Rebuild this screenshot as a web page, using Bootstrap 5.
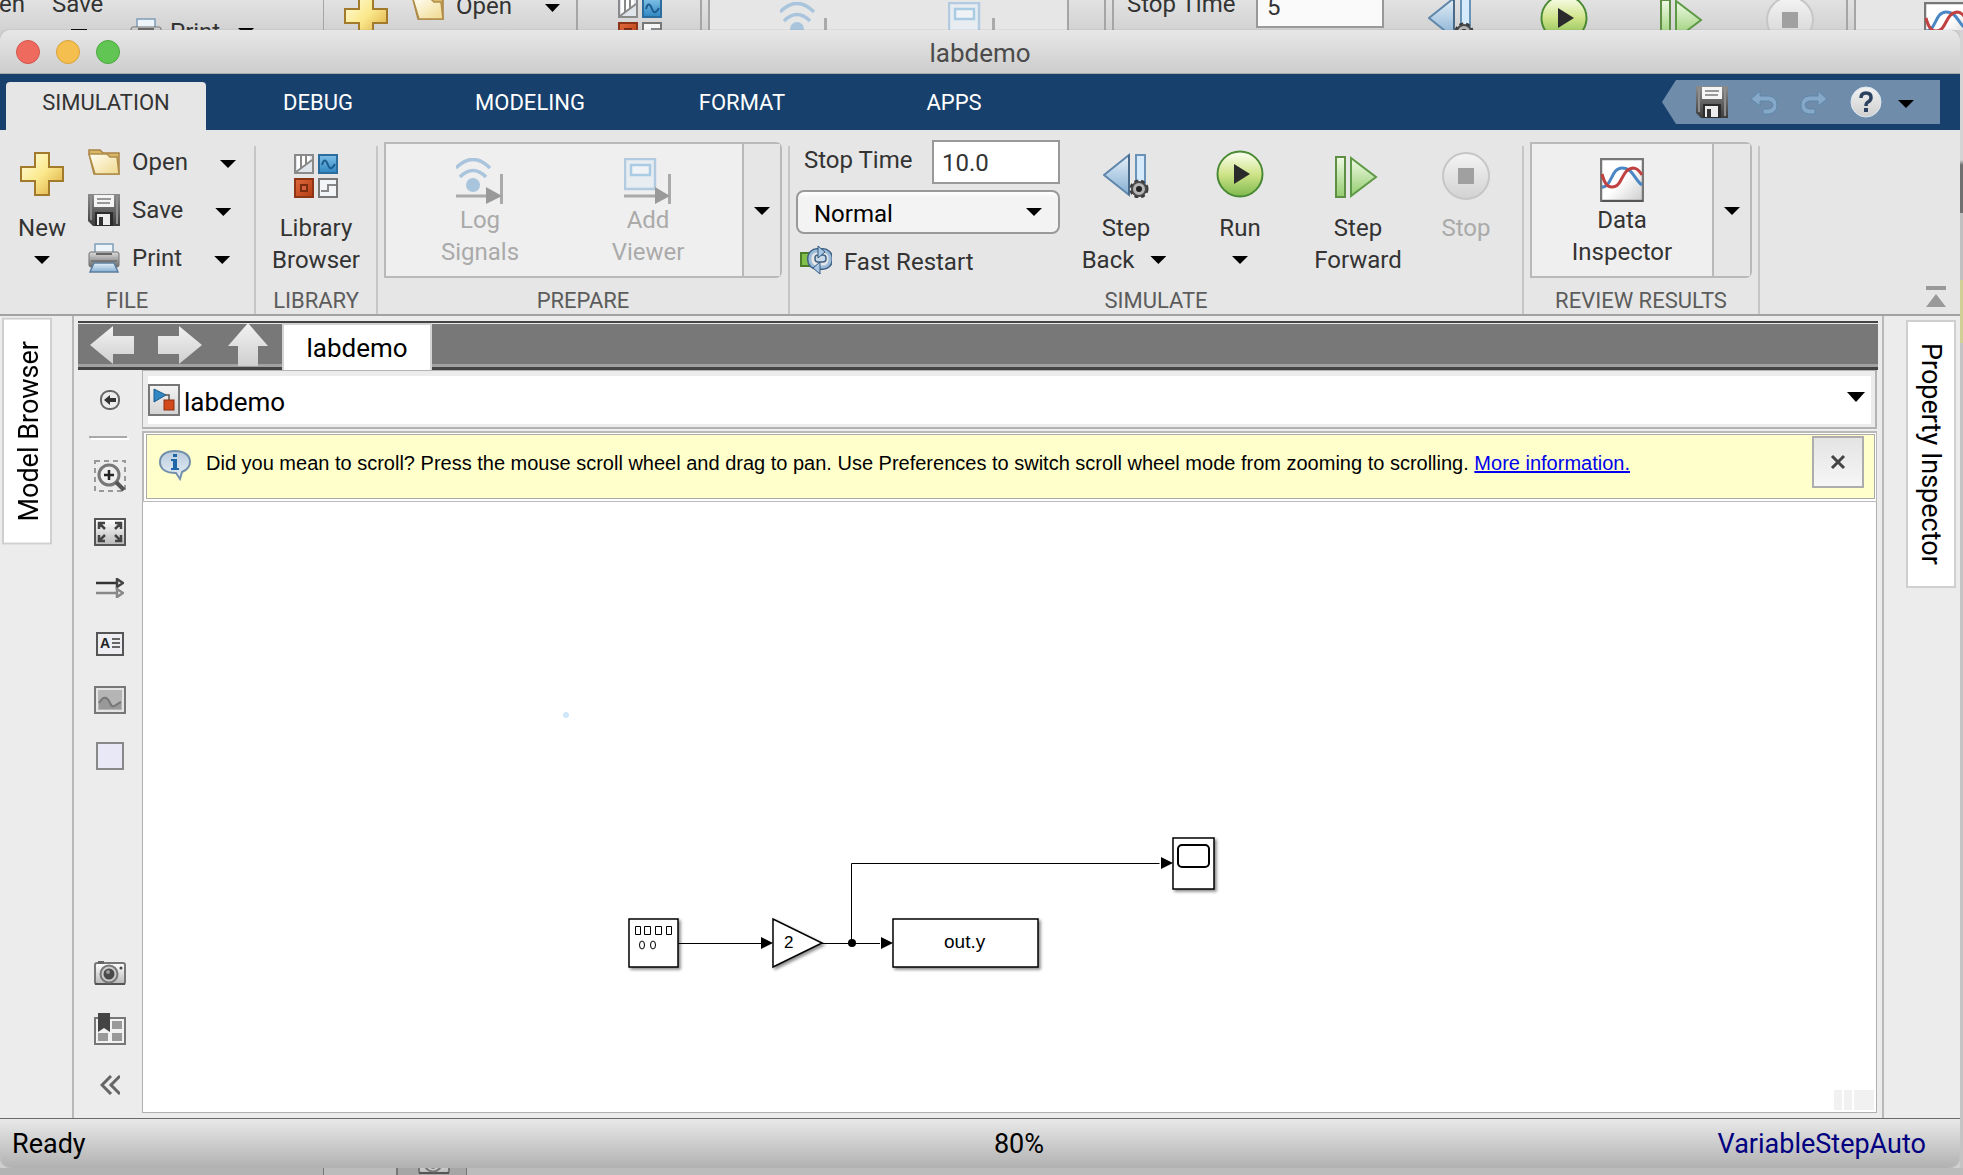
<!DOCTYPE html>
<html lang="en">
<head>
<meta charset="utf-8">
<meta name="viewport" content="width=device-width, initial-scale=1">
<title>labdemo</title>
<link href="https://cdn.jsdelivr.net/npm/bootstrap@5.3.0/dist/css/bootstrap.min.css" rel="stylesheet">
<style>
  :root { --ui: Roboto, "Liberation Sans", sans-serif; --ink: #333; --rule: #b9b9b9; }
  body { font-family: var(--ui); font-size: 24px; line-height: 32px; color: var(--ink); background: #cfcfcf; overflow: hidden; }
  button, input, select { font: inherit; color: inherit; }
  svg { display: block; flex: none; }
  .plain { background: none; border: 0; padding: 0; }
  .plain:disabled { color: #aaa; }

  /* desktop: strips of the windows behind */
  .behind-top { height: 30px; overflow: hidden; background: linear-gradient(#e2e2e2, #d2d2d2); }
  .behind-bottom { height: 7px; overflow: hidden; background: #a6a6a6; }
  .behind-right { width: 3px; background: linear-gradient(#d4d4d4 0 130px, #707070 135px 183px, #c0c0c0 183px 250px, #cfcf96 250px 313px, #c4c4c4 313px); }

  .app { border-radius: 10px 10px 12px 12px; overflow: hidden; background: #ececec; box-shadow: 0 0 1px #777; }
  .titlebar { height: 44px; background: linear-gradient(#e7e7e7, #cdcdcd); border-bottom: 1px solid #aaa; font-size: 26px; color: #4b4b4b; padding-top: 2px; }
  .lights { left: 16px; top: 10px; gap: 16px; }
  .light { width: 24px; height: 24px; border-radius: 50%; border: 1px solid; padding: 0; }
  .light.red { background: #ee6a5f; border-color: #d5564c; }
  .light.amber { background: #f5bf4f; border-color: #d9a23c; }
  .light.green { background: #61c554; border-color: #4ea73f; }

  .tabstrip { height: 56px; background: #17406d; padding: 8px 0 0 6px; font-size: 22px; }
  .tabs { gap: 12px; }
  .tabs .nav-link { width: 200px; height: 48px; padding: 5px 0; color: #fff; text-align: center; border-radius: 4px 4px 0 0; }
  .tabs .nav-link.active { background: #e6e6e6; color: var(--ink); }
  .quick { width: 278px; height: 44px; gap: 22px; margin: -2px 20px 0 0; padding-left: 34px; background: #6f8dab; clip-path: polygon(14px 0, 100% 0, 100% 100%, 14px 100%, 0 50%); }

  .ribbon { background: #e6e6e6; border-bottom: 2px solid #a2a2a2; padding-top: 8px; height: 186px; }
  .section-rule { width: 2px; margin-top: 8px; background: #c6c6c6; }
  .group-label { font-size: 22px; line-height: 28px; color: #5c5c5c; text-align: center; height: 27px; }
  .group-body { height: 149px; overflow: hidden; }
  .big { padding-top: 12px; text-align: center; line-height: 32px; display: flex; flex-direction: column; align-items: center; }
  .big > svg { margin-bottom: 14px; }
  .big > .arrow { margin-top: 12px; }
  .arrow { width: 16px; height: 8px; background: #000; clip-path: polygon(0 0, 100% 0, 50% 100%); display: block; flex: none; }
  .file-row { height: 48px; }
  .gallery { height: 136px; margin: 4px 6px 0; border: 2px solid var(--rule); border-radius: 0 6px 6px 0; background: #efefef; }
  .gallery .cell { padding-top: 14px; line-height: 32px; display: flex; flex-direction: column; align-items: center; }
  .gallery .pair { padding: 0 10px; }
  .gallery .pair .cell { width: 168px; }
  .gallery .more { width: 38px; border-left: 2px solid var(--rule); background: #e6e6e6; padding-top: 2px; }
  .sim-fields { width: 270px; padding: 2px 0 0 6px; }
  .time-input { width: 128px; height: 44px; border: 2px solid #999; background: #fff; padding: 2px 8px 0; outline: 0; }
  .mode-wrap { position: relative; margin-top: 6px; }
  .mode { width: 100%; height: 44px; appearance: none; border: 2px solid #999; border-radius: 8px; background: linear-gradient(#fff, #f3f3f3 6px); color: #000; padding: 3px 16px 0; }
  .mode-wrap .arrow { position: absolute; right: 18px; top: 18px; pointer-events: none; }

  .side { color: #000; font-size: 27px; }
  .side-left { width: 74px; border-right: 2px solid var(--rule); padding: 2px 0 0 2px; }
  .side-right { width: 78px; border-left: 2px solid var(--rule); padding: 4px 4px 0 0; }
  .side button { writing-mode: vertical-rl; width: 50px; border: 2px solid #cfcfcf; background: #fff; padding: 21px 0; line-height: 46px; }
  .side-left button { transform: rotate(180deg); line-height: 50px; }

  .docbar { height: 49px; margin: 5px 4px 0; border-top: 2px solid #444; border-bottom: 3px solid #444; background: linear-gradient(#e6e6e6 1px, #787878 1px 41px, #a2a2a2 41px); }
  .doctab { width: 150px; height: 48px; margin: 0 0 -3px 2px; border: solid #d4d4d4; border-width: 2px 2px 0; background: #fff; color: #000; font-size: 26px; padding: 0; }
  .palette { width: 68px; padding: 2px 0 5px; }
  .palette button { height: 56px; width: 64px; margin-left: 4px; display: flex; align-items: center; justify-content: center; }
  .palette hr { width: 38px; margin: 8px 0 10px 15px; border-top: 2px solid #a9a9a9; box-shadow: 2px 2px 0 #fff; opacity: 1; }
  .path-row { border: solid #b3b3b3; border-width: 1px 2px 2px 1px; padding: 5px 4px 4px 5px; height: 59px; }
  .path-row .inner { background: #fff; color: #000; font-size: 26px; height: 48px; }
  .path-row .arrow { width: 18px; height: 10px; margin: 0 2px 6px 0; }
  .notice { margin-top: 2px; border: solid #b9b9b9; border-width: 2px 1px 1px 2px; padding: 1px 1px 2px 2px; height: 71px; background: #fff; }
  .notice .inner { height: 65px; border: 1px solid #aaa; background: #ffffcc; font-family: "Liberation Sans", Arial, sans-serif; font-size: 20px; color: #000; padding-left: 12px; }
  .notice .message { padding: 12px 0 0 15px; }
  .notice a { color: #0000ee; }
  .dismiss { width: 52px; height: 52px; border: 2px solid #adadad; background: linear-gradient(#e4e4e4, #f6f6f6); margin: 1px 10px 0 0; }
  .canvas { background: #fff; border: solid #b0b0b0; border-width: 0 1px 1px; margin-bottom: 5px; position: relative; overflow: hidden; }
  .grip { right: 2px; bottom: 2px; gap: 2px; }
  .grip i { width: 8px; height: 20px; background: #f1f1f1; }
  .grip i:last-child { width: 20px; }
  .statusbar { height: 50px; border-top: 1px solid #6a6a6a; background: linear-gradient(#e9e9e9, #b1b1b1); color: #000; font-size: 27px; line-height: 32px; padding: 0 34px 0 12px; }
  .zoom-level { padding-left: 100px; }
  .solver { color: #000080; text-decoration: none; }
</style>
<script src="https://cdn.jsdelivr.net/npm/bootstrap@5.3.0/dist/js/bootstrap.bundle.min.js"></script>
</head>
<body class="d-flex flex-column vh-100">

<svg width="0" height="0" class="position-absolute" aria-hidden="true">
  <defs>
    <linearGradient id="gGold" x1="0" y1="0" x2="1" y2="1"><stop offset="0" stop-color="#fffde0"/><stop offset=".5" stop-color="#fbe98d"/><stop offset="1" stop-color="#dba43a"/></linearGradient>
    <linearGradient id="gFold" x1="0" y1="0" x2="1" y2="1"><stop offset="0" stop-color="#fffef4"/><stop offset="1" stop-color="#f0d98c"/></linearGradient>
    <linearGradient id="gDark" x1="0" y1="0" x2="0" y2="1"><stop offset="0" stop-color="#8c8c8c"/><stop offset="1" stop-color="#3c3c3c"/></linearGradient>
    <linearGradient id="gPrn" x1="0" y1="0" x2="0" y2="1"><stop offset="0" stop-color="#dcdcdc"/><stop offset="1" stop-color="#6a6a6a"/></linearGradient>
    <linearGradient id="gPale" x1="0" y1="0" x2="0" y2="1"><stop offset="0" stop-color="#fff"/><stop offset="1" stop-color="#b9b9b9"/></linearGradient>
    <linearGradient id="gBlue" x1="0" y1="0" x2="0" y2="1"><stop offset="0" stop-color="#e6f1f9"/><stop offset="1" stop-color="#85aed2"/></linearGradient>
    <linearGradient id="gInfo" x1="0" y1="0" x2="0" y2="1"><stop offset="0" stop-color="#b9cbdc"/><stop offset="1" stop-color="#e8f0f7"/></linearGradient>
    <linearGradient id="gSky" x1="0" y1="0" x2="0" y2="1"><stop offset="0" stop-color="#7fc0e6"/><stop offset="1" stop-color="#2f86c2"/></linearGradient>
    <linearGradient id="gRun" x1="0" y1="0" x2="0" y2="1"><stop offset="0" stop-color="#fdfff4"/><stop offset=".5" stop-color="#cfe488"/><stop offset="1" stop-color="#7fb94e"/></linearGradient>
    <linearGradient id="gStep" x1="0" y1="0" x2="0" y2="1"><stop offset="0" stop-color="#f0fae6"/><stop offset="1" stop-color="#93cc6e"/></linearGradient>
    <linearGradient id="gGrey" x1="0" y1="0" x2="0" y2="1"><stop offset="0" stop-color="#f4f4f4"/><stop offset="1" stop-color="#d2d2d2"/></linearGradient>
    <linearGradient id="gRust" x1="0" y1="0" x2="1" y2="1"><stop offset="0" stop-color="#e0693c"/><stop offset="1" stop-color="#b23c12"/></linearGradient>
    <linearGradient id="gNav" x1="0" y1="0" x2="0" y2="1"><stop offset="0" stop-color="#f2f2f2"/><stop offset="1" stop-color="#cfcfcf"/></linearGradient>
    <linearGradient id="gFade" x1="0" y1="0" x2="1" y2="1"><stop offset=".5" stop-color="#fff"/><stop offset="1" stop-color="#ccc"/></linearGradient>
    <filter id="shade" x="-20%" y="-20%" width="150%" height="150%"><feDropShadow dx="2" dy="2" stdDeviation="1.4" flood-color="#000" flood-opacity=".45"/></filter>
  </defs>
  <symbol id="iPlus" viewBox="0 0 44 44"><path d="M15 1h14v14h14v14H29v14H15V29H1V15h14z" fill="url(#gGold)" stroke="#a27a2c" stroke-width="2"/></symbol>
  <symbol id="iOpen" viewBox="0 0 32 26"><path d="M1 5V1h11l3 3h16v21H6z" fill="#d9b768" stroke="#a98343" stroke-width="1.5"/><path d="M1 5h18l3 3h7l2 17H7z" fill="url(#gFold)" stroke="#b08d48" stroke-width="1.5"/></symbol>
  <symbol id="iSave" viewBox="0 0 32 32"><path d="M0 0h32v32H5l-5-5z" fill="url(#gDark)"/><path d="M2 2h2v24H2zM28 2h2v28h-2z" fill="#8e8e8e"/><path d="M6 1h20v12H6z" fill="#f5f5f5"/><path d="M9 5h14M9 9h13" stroke="#999" stroke-width="2"/><path d="M7 18h18v14H7z" fill="#2b2b2b"/><path d="M9 20h13v11H9z" fill="#ececec"/><path d="M11 23h4v8h-4z" fill="#333"/></symbol>
  <symbol id="iPrint" viewBox="0 0 32 30"><path d="M7 1h18v11H7z" fill="#edf4fa" stroke="#7f9cb8" stroke-width="1.5"/><rect x="1" y="9" width="30" height="15" rx="2" fill="url(#gPrn)" stroke="#707070"/><path d="M8 10h16v2H8z" fill="#666"/><path d="M3 18h26" stroke="#555"/><path d="M6 20h20l4 9H2z" fill="url(#gBlue)" stroke="#5d7f9e" stroke-width="1.5"/></symbol>
  <symbol id="iLib" viewBox="0 0 44 44"><g stroke-width="2"><rect x="1" y="1" width="18" height="18" fill="#dfe5ea" stroke="#8a8a8a"/><path d="M3 2h3v14l-3 2zM8 2h3v10l-3 2zM13 2h3v6l-3 2z" fill="#fff"/><path d="M7 2v12M12 2v8M2 18L18 6" stroke="#888" fill="none"/><rect x="25" y="1" width="18" height="18" fill="url(#gSky)" stroke="#2c6d9e"/><path d="M28 11c2-7 4-5 6 0s4 4 7-1" stroke="#1d5c8e" fill="none"/><rect x="1" y="25" width="18" height="18" fill="url(#gRust)" stroke="#8d3517"/><rect x="7" y="31" width="6" height="6" fill="#d3603a" stroke="#7d2b10"/><rect x="25" y="25" width="18" height="18" fill="#f3f5f7" stroke="#777"/><path d="M27 37h7v-6h8" stroke="#888" fill="none"/></g></symbol>
  <symbol id="iLog" viewBox="0 0 48 46"><g fill="none" stroke="#a9c5dd" stroke-width="3.5"><path d="M0 10Q17-7 34 10"/><path d="M4 19Q17 6 30 19"/></g><circle cx="17" cy="27" r="7" fill="#a9c5dd"/><path d="M0 38h34M45.500 16v30" stroke="#aaa" stroke-width="3"/><path d="M30 29l16 9-16 8z" fill="#999"/></symbol>
  <symbol id="iView" viewBox="0 0 48 46"><rect x="1" y="1" width="30" height="30" fill="#e8edf2" stroke="#b3cbe0" stroke-width="2.500"/><rect x="7" y="7" width="19" height="10" fill="#f0f3f5" stroke="#a9cbe4" stroke-width="2.500"/><path d="M0 38h34M45.500 16v30" stroke="#aaa" stroke-width="3"/><path d="M31 29l15 9-15 8z" fill="#999"/></symbol>
  <symbol id="iBack" viewBox="0 0 46 46"><path d="M26 2v40L1 22z" fill="url(#gBlue)" stroke="#5f87ab" stroke-width="2"/><path d="M26 2v40" stroke="#4a6a8a" stroke-width="2"/><rect x="33" y="2" width="9" height="30" fill="#d5eafa" stroke="#6b93b8" stroke-width="2"/><circle cx="36" cy="36" r="7" fill="#b5b5b5" stroke="#4a4a4a" stroke-width="2"/><circle cx="36" cy="36" r="8.500" fill="none" stroke="#3a3a3a" stroke-width="2" stroke-dasharray="4 3"/><circle cx="36" cy="36" r="3" fill="#222"/></symbol>
  <symbol id="iRun" viewBox="0 0 48 48"><circle cx="24" cy="24" r="22.500" fill="url(#gRun)" stroke="#4b8a34" stroke-width="2"/><path d="M18 14v20l16-10z" fill="#2b2b2b"/></symbol>
  <symbol id="iFwd" viewBox="0 0 44 44"><rect x="2" y="2" width="9" height="40" fill="url(#gStep)" stroke="#5e8f45" stroke-width="2"/><path d="M17 3v38l25-19z" fill="url(#gStep)" stroke="#5e9a45" stroke-width="2"/></symbol>
  <symbol id="iStop" viewBox="0 0 48 48"><circle cx="24" cy="24" r="23" fill="url(#gGrey)" stroke="#c6c6c6" stroke-width="2"/><path d="M16 16h16v16H16z" fill="#a0a0a0"/></symbol>
  <symbol id="iData" viewBox="0 0 44 44"><rect x="1" y="1" width="42" height="42" fill="url(#gFade)" stroke="#777" stroke-width="2.500"/><path d="M2 43h41" stroke="#555" stroke-width="2"/><path d="M2 29c10 0 9-19 20-19 11 0 12 11 20 17" fill="none" stroke="#4a87c4" stroke-width="3"/><path d="M2 16c2 7 4 13 10 13 11 0 9-18 21-19 5 0 7 4 9 7" fill="none" stroke="#c0413f" stroke-width="3"/></symbol>
  <symbol id="iFast" viewBox="0 0 32 30"><rect x="1" y="8" width="12" height="13" fill="#83c04b" stroke="#4c7d28" stroke-width="2"/><rect x="10" y="6" width="20" height="16" rx="7" fill="none" stroke="#3f6286" stroke-width="6"/><rect x="10" y="6" width="20" height="16" rx="7" fill="#e6e6e6" stroke="#9dbcda" stroke-width="3"/><rect x="15" y="10" width="11" height="7" rx="3" fill="#c9d9e8" stroke="#3f6286" stroke-width="1.5"/><path d="M18 1l7 6-7 6zM20 29l-7-6 7-6z" fill="#a9c8e6" stroke="#34587c"/></symbol>
  <symbol id="iCam" viewBox="0 0 32 26"><rect x="1" y="3" width="30" height="21" rx="2" fill="url(#gPale)" stroke="#777" stroke-width="2"/><path d="M4 1h6v3H4z" fill="#666"/><path d="M1 24h30" stroke="#555" stroke-width="2"/><circle cx="15" cy="14" r="8.500" fill="#ccc" stroke="#777" stroke-width="2"/><circle cx="15" cy="14" r="5.500" fill="#4a4a4a"/><circle cx="14" cy="12" r="2" fill="#999"/><circle cx="27" cy="8" r="1.500" fill="#444"/></symbol>
</svg>

<!-- window behind, visible above the app -->
<div class="behind-top">
<svg width="1963" height="30" font-family="Roboto" font-size="24" fill="#333" aria-hidden="true">
  <text x="-1" y="12">en</text><text x="52" y="12">Save</text>
  <svg x="130" y="18" width="32" height="30"><use href="#iPrint"/></svg><text x="170" y="40">Print</text>
  <path d="M0 30h4zM71 29h16v1H71zM238 28h16l-8 8z" fill="#000"/>
  <path d="M323 0h1v30h-1zM576 0h2v30h-2zM700 0h2v30h-2zM708 0h2v30h-2zM1067 0h2v30h-2zM1104 0h2v30h-2zM1112 0h2v30h-2zM1846 0h2v30h-2zM1854 0h2v30h-2z" fill="#a5a5a5"/>
  <path d="M710 0h357v30H710zM1856 0h107v30h-107z" fill="#e6e6e6"/>
  <svg x="344" y="-6" width="44" height="44"><use href="#iPlus"/></svg>
  <svg x="412" y="-6" width="32" height="26"><use href="#iOpen"/></svg><text x="456" y="14">Open</text><path d="M545 4h15l-7.500 8z" fill="#000"/>
  <svg x="618" y="-2" width="44" height="44"><use href="#iLib"/></svg>
  <svg x="780" y="2" width="48" height="46"><use href="#iLog"/></svg><svg x="948" y="2" width="48" height="46"><use href="#iView"/></svg>
  <text x="1127" y="12">Stop Time</text><path d="M1257 -2h126v29h-126z" fill="#fafafa" stroke="#999" stroke-width="2"/><text x="1267" y="15">5</text>
  <svg x="1428" y="-4" width="46" height="46"><use href="#iBack"/></svg><svg x="1540" y="-6" width="48" height="48"><use href="#iRun"/></svg>
  <svg x="1659" y="-2" width="44" height="44"><use href="#iFwd"/></svg><svg x="1766" y="-4" width="48" height="48"><use href="#iStop"/></svg>
  <svg x="1924" y="2" width="44" height="44"><use href="#iData"/></svg>
</svg>
</div>

<div class="d-flex flex-grow-1" style="min-height:0">
<main class="app d-flex flex-column flex-grow-1">
  <header class="titlebar d-flex align-items-center justify-content-center position-relative">
    <div class="lights d-flex position-absolute">
      <button class="light red" aria-label="Close"></button><button class="light amber" aria-label="Minimize"></button><button class="light green" aria-label="Zoom"></button>
    </div>
    <span>labdemo</span>
  </header>

  <div class="tabstrip d-flex justify-content-between">
    <nav class="tabs nav flex-nowrap">
      <a class="nav-link active" href="#">SIMULATION</a><a class="nav-link" href="#">DEBUG</a><a class="nav-link" href="#">MODELING</a><a class="nav-link" href="#">FORMAT</a><a class="nav-link" href="#">APPS</a>
    </nav>
    <div class="quick d-flex align-items-center">
      <button class="plain" aria-label="Save"><svg width="32" height="32"><use href="#iSave"/></svg></button>
      <button class="plain" aria-label="Undo"><svg width="28" height="26"><path d="M1 9l9-8v5h9q8 1 8 9t-8 9h-6v-5h6q4-1 4-4t-4-4h-9v5z" transform="translate(0 1)" fill="#86a9ca" stroke="#5f86aa"/></svg></button>
      <button class="plain" aria-label="Redo"><svg width="28" height="26"><path d="M27 9l-9-8v5H9q-8 1-8 9t8 9h6v-5H9q-4-1-4-4t4-4h9v5z" transform="translate(0 1)" fill="#86a9ca" stroke="#5f86aa"/></svg></button>
      <button class="plain" aria-label="Help"><svg width="32" height="32"><circle cx="16" cy="16" r="15" fill="url(#gNav)" stroke="#dbe6f0"/><path d="M11 12q0-5 5-5t5 4.500q0 3-3 4.500-2 1-2 4" fill="none" stroke="#2c4260" stroke-width="3.500"/><path d="M14 22h4v4h-4z" fill="#2c4260"/></svg></button>
      <button class="plain mt-1" aria-label="More"><span class="arrow" style="margin-left:-6px"></span></button>
    </div>
  </div>

  <div class="ribbon d-flex">
    <section style="width:254px">
      <div class="group-body d-flex">
        <button class="plain big" style="width:84px"><svg width="44" height="48"><use href="#iPlus" width="44" height="44" y="2"/></svg>New<span class="arrow"></span></button>
        <div class="ps-1">
          <div class="file-row d-flex align-items-center"><button class="plain d-flex align-items-center"><svg width="32" height="26" class="me-2"><use href="#iOpen"/></svg><span class="ps-1">Open</span></button><button class="plain ms-4 ps-1" aria-label="Open options"><span class="arrow ms-1 mt-1"></span></button></div>
          <div class="file-row d-flex align-items-center"><button class="plain d-flex align-items-center"><svg width="32" height="32" class="me-2"><use href="#iSave"/></svg><span class="ps-1">Save</span></button><button class="plain ms-4 ps-1" aria-label="Save options"><span class="arrow ms-1 mt-1"></span></button></div>
          <div class="file-row d-flex align-items-center"><button class="plain d-flex align-items-center"><svg width="32" height="30" class="me-2"><use href="#iPrint"/></svg><span class="ps-1">Print</span></button><button class="plain ms-4 ps-1" aria-label="Print options"><span class="arrow ms-1 mt-1"></span></button></div>
        </div>
      </div>
      <div class="group-label">FILE</div>
    </section>
    <div class="section-rule"></div>
    <section style="width:120px">
      <div class="group-body"><button class="plain big w-100"><svg width="44" height="48"><use href="#iLib" width="44" height="44" y="4"/></svg>Library<br>Browser</button></div>
      <div class="group-label">LIBRARY</div>
    </section>
    <div class="section-rule"></div>
    <section>
      <div class="group-body"><div class="gallery d-flex">
        <div class="pair d-flex">
          <button class="plain cell" disabled><svg width="48" height="46"><use href="#iLog"/></svg><span>Log<br>Signals</span></button>
          <button class="plain cell" disabled><svg width="48" height="46"><use href="#iView"/></svg><span>Add<br>Viewer</span></button>
        </div>
        <button class="plain more d-flex align-items-center justify-content-center" aria-label="More tools"><span class="arrow"></span></button>
      </div></div>
      <div class="group-label">PREPARE</div>
    </section>
    <div class="section-rule"></div>
    <section style="width:732px">
      <div class="group-body d-flex">
        <div class="sim-fields">
          <div class="d-flex justify-content-between ps-1"><label for="stopTime" class="pt-1 ps-1">Stop Time</label><input id="stopTime" class="time-input" value="10.0"></div>
          <div class="mode-wrap"><select class="mode" aria-label="Simulation mode"><option>Normal</option></select><span class="arrow"></span></div>
          <button class="plain d-flex align-items-center mt-2 ps-1"><svg width="32" height="30" class="me-2"><use href="#iFast"/></svg><span class="ps-1 pt-1">Fast Restart</span></button>
        </div>
        <div class="d-flex align-items-start" style="gap:18px;margin-left:18px">
          <button class="plain big" style="width:96px"><svg width="46" height="48"><use href="#iBack" width="46" height="46" y="3"/></svg>Step<span class="d-flex align-items-center">Back<span class="arrow ms-3 me-1"></span></span></button>
          <button class="plain big" style="width:96px"><svg width="48" height="48"><use href="#iRun"/></svg>Run<span class="arrow"></span></button>
          <button class="plain big" style="width:104px"><svg width="48" height="48"><use href="#iFwd" width="44" height="44" y="5"/></svg>Step<br>Forward</button>
          <button class="plain big" style="width:76px" disabled><svg width="48" height="50" class="mb-2"><use href="#iStop" width="48" height="48" y="2"/></svg><span class="pt-1">Stop</span></button>
        </div>
      </div>
      <div class="group-label">SIMULATE</div>
    </section>
    <div class="section-rule"></div>
    <section>
      <div class="group-body"><div class="gallery d-flex">
        <button class="plain cell" style="width:180px"><svg width="44" height="46"><use href="#iData" width="44" height="44"/></svg><span>Data<br>Inspector</span></button>
        <button class="plain more d-flex align-items-center justify-content-center" aria-label="More results tools"><span class="arrow"></span></button>
      </div></div>
      <div class="group-label">REVIEW RESULTS</div>
    </section>
    <div class="section-rule"></div>
    <button class="plain ms-auto align-self-end" style="margin:0 14px 6px 0" aria-label="Collapse ribbon"><svg width="20" height="22" fill="#999"><path d="M0 0h20v4H0zM10 8l10 13H0z"/></svg></button>
  </div>

  <div class="d-flex flex-grow-1">
    <aside class="side side-left"><button>Model Browser</button></aside>
    <div class="flex-grow-1 d-flex flex-column">
      <div class="docbar d-flex align-items-start">
        <button class="plain" style="margin:2px 12px 0" aria-label="Back"><svg width="44" height="40"><path d="M0 20L23 1v10h21v18H23v10z" fill="url(#gNav)"/></svg></button>
        <button class="plain" style="margin:2px 12px 0" aria-label="Forward"><svg width="44" height="40"><path d="M44 20L21 1v10H0v18h21v10z" fill="url(#gNav)"/></svg></button>
        <button class="plain" style="margin:0 12px" aria-label="Up"><svg width="42" height="43"><path d="M22 0l20 23H32v20H12V23H2z" fill="url(#gNav)"/></svg></button>
        <button class="doctab">labdemo</button>
      </div>
      <div class="d-flex flex-grow-1">
        <div class="palette d-flex flex-column">
          <button class="plain" aria-label="Hide browser"><svg width="20" height="20" fill="none" stroke="#666" stroke-width="2"><rect x="1" y="1" width="18" height="18" rx="8"/><path d="M16 10H8" stroke="#333" stroke-width="4"/><path d="M4 10l6-5v10z" fill="#333" stroke="none"/></svg></button>
          <hr>
          <button class="plain" aria-label="Zoom"><svg width="32" height="32" fill="none"><rect x="1" y="1" width="30" height="30" stroke="#999" stroke-width="2" stroke-dasharray="5 4"/><circle cx="15" cy="15" r="10" fill="#eee" stroke="#777" stroke-width="3"/><path d="M10 15h10M15 10v10" stroke="#222" stroke-width="2.500"/><path d="M22 22l8 8" stroke="#555" stroke-width="4"/></svg></button>
          <button class="plain" aria-label="Fit to view"><svg width="32" height="28" fill="none"><rect x="1" y="1" width="30" height="26" fill="url(#gPale)" stroke="#555" stroke-width="2"/><path d="M5 11V5h6M21 5h6v6M27 17v6h-6M11 23H5v-6M5 5l6 6M27 5l-6 6M27 23l-6-6M5 23l6-6" stroke="#444" stroke-width="2.500"/></svg></button>
          <button class="plain" aria-label="Sample time"><svg width="28" height="20" fill="none" stroke-width="2.500"><path d="M0 5h21" stroke="#333"/><path d="M21 1v8l6-4z" stroke="#444"/><path d="M0 15h21M21 11v8l6-4z" stroke="#888"/></svg></button>
          <button class="plain" aria-label="Annotation"><svg width="28" height="24"><rect x="1" y="1" width="26" height="22" fill="#eeeef2" stroke="#555" stroke-width="2"/><text x="4" y="16" font-family="Liberation Sans" font-size="14" font-weight="700" fill="#222">A</text><path d="M16 7h8M16 11h8M16 15h8" stroke="#666" stroke-width="2"/></svg></button>
          <button class="plain" aria-label="Image"><svg width="32" height="28"><rect x="1" y="1" width="30" height="26" fill="#e4e4e4" stroke="#777" stroke-width="2"/><path d="M4 4h24v20H4z" fill="#b5b5b5"/><path d="M5 18c4-9 8-9 11-1s5 1 11-1v7H5z" fill="#999"/><path d="M5 17c4-7 8-7 11 0s6 1 11-1" fill="none" stroke="#777" stroke-width="2"/></svg></button>
          <button class="plain" aria-label="Area"><svg width="28" height="28"><rect x="1" y="1" width="26" height="26" fill="#e8e8f6" stroke="#888" stroke-width="2"/></svg></button>
          <button class="plain mt-auto" aria-label="Screenshot"><svg width="32" height="26"><use href="#iCam"/></svg></button>
          <button class="plain" aria-label="Viewmarks"><svg width="32" height="32"><rect x="1" y="5" width="30" height="26" fill="#f2f2f2" stroke="#777" stroke-width="2"/><path d="M18 8h10v8H18zM4 20h10v8H4zM18 20h10v8H18z" fill="#999"/><path d="M4 0h12v19l-6-4-6 4z" fill="#444"/></svg></button>
          <button class="plain" aria-label="Collapse palette"><svg width="20" height="20" fill="none" stroke="#666" stroke-width="3"><path d="M11 1l-9 9 9 9M20 1l-9 9 9 9"/></svg></button>
        </div>
        <div class="flex-grow-1 d-flex flex-column" style="margin-right:5px">
          <div class="path-row"><div class="inner d-flex align-items-center">
            <svg width="32" height="32"><rect x="1" y="1" width="30" height="30" fill="url(#gGrey)" stroke="#777" stroke-width="2"/><path d="M6 5l12 6-12 7z" fill="#2f86c2" stroke="#1d5c8e"/><path d="M17 11h4v5" fill="none" stroke="#555" stroke-width="1.500"/><rect x="16" y="16" width="10" height="10" fill="#d2491c" stroke="#8d2f0e"/></svg>
            <span class="ps-1 pt-1">labdemo</span><button class="plain ms-auto me-1" aria-label="Path history"><span class="arrow"></span></button></div></div>
          <div class="notice"><div class="inner d-flex align-items-start" role="status">
            <svg width="32" height="32" class="mt-2 pt-1 overflow-visible"><path d="M16 4c9 0 15 4 15 11 0 5-3 8-8 10l-2 7-4-6C7 26 1 22 1 15 1 8 7 4 16 4z" fill="url(#gInfo)" stroke="#7290ab" stroke-width="2"/><path d="M12 12h6v9h2v2h-8v-2h2v-7h-2zM14 7h4v3h-4z" fill="#1e66a8"/></svg>
            <span class="message flex-grow-1">Did you mean to scroll? Press the mouse scroll wheel and drag to pan. Use Preferences to switch scroll wheel mode from zooming to scrolling. <a href="#">More information.</a></span>
            <button class="dismiss d-flex align-items-center justify-content-center" aria-label="Dismiss"><svg width="16" height="16"><path d="M2 2l12 12M14 2L2 14" stroke="#444" stroke-width="3"/></svg></button>
          </div></div>
          <div class="canvas flex-grow-1">
            <svg width="1200" height="520" font-family="Liberation Sans" font-size="19" fill="#fff" stroke="#000" stroke-width="1.500">
              <g transform="translate(1 0)">
              <circle cx="422" cy="213" r="3" fill="#cfe6fb" stroke="none"/>
              <g filter="url(#shade)"><rect x="485" y="417" width="49" height="48"/><path d="M629 417v48l49-24z"/><rect x="749" y="417" width="145" height="48"/><rect x="1029" y="336" width="41" height="51"/></g>
              <path d="M534 441.500h84M678 441.500h58M707.500 441v-79.500h308" fill="none" stroke-width="1"/>
              <path d="M617 435v12l12-6zM737 435v12l12-6zM1017 355v12l12-6z" fill="#000" stroke="none"/>
              <circle cx="708" cy="441" r="4" fill="#000" stroke="none"/>
              <rect x="1034" y="343" width="31" height="22" rx="4" stroke-width="2"/>
              <g stroke-width="1"><path d="M491.500 424.500h5v8h-5zM500.500 424.500h6v8h-6zM511.500 424.500h6v8h-6zM522.500 424.500h5v8h-5z"/><ellipse cx="498" cy="443" rx="2.500" ry="4"/><ellipse cx="509" cy="443" rx="2.500" ry="4"/></g>
              <g fill="#000" stroke="none"><text x="640" y="446" font-size="17">2</text><text x="800" y="446">out.y</text></g>
              </g>
            </svg>
            <div class="grip d-flex position-absolute"><i></i><i></i><i></i></div>
          </div>
        </div>
      </div>
    </div>
    <aside class="side side-right d-flex justify-content-end align-items-start"><button>Property Inspector</button></aside>
  </div>

  <footer class="statusbar row g-0 align-items-center">
    <div class="col-4">Ready</div><div class="col-4 text-center zoom-level">80%</div><div class="col-4 text-end"><a class="solver" href="#">VariableStepAuto</a></div>
  </footer>
</main>
<div class="behind-right"></div>
</div>

<div class="behind-bottom">
<svg width="1963" height="7" aria-hidden="true"><path d="M0 0h323v7H0z" fill="#b4b4b4"/><path d="M324 0h73v7h-73zM467 0h1500v7H467z" fill="#bcbcbc"/><path d="M323 0h1v7h-1zM396 0h2v7h-2zM466 0h1v7h-1z" fill="#777"/><svg x="418" y="-19" width="32" height="26"><use href="#iCam"/></svg></svg>
</div>
</body>
</html>
